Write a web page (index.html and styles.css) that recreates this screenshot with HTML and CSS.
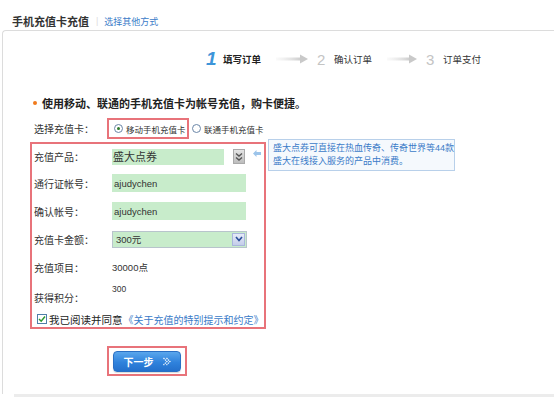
FILE: index.html
```html
<!DOCTYPE html>
<html lang="zh-CN">
<head>
  <meta charset="UTF-8">
  <title>手机充值卡充值</title>
  <link rel="stylesheet" href="styles.css">
</head>
<body>

  <div class="page-head">
    <h1 class="page-title">手机充值卡充值</h1>
    <span class="sep">|</span>
    <a class="other-way" href="#">选择其他方式</a>
  </div>

  <div class="panel">

    <!-- steps -->
    <div class="steps">
      <span class="step-num active">1</span>
      <span class="step-text active">填写订单</span>
      <svg class="step-arrow" width="32" height="10" viewBox="0 0 32 10">
        <defs>
          <linearGradient id="fade1" x1="0" x2="1" y1="0" y2="0">
            <stop offset="0" stop-color="#e6e6e6" stop-opacity="0.2"/>
            <stop offset="1" stop-color="#c9c9c9"/>
          </linearGradient>
        </defs>
        <rect x="0" y="3.5" width="26" height="3" fill="url(#fade1)"/>
        <path d="M24 0.5 L32 5 L24 9.5 Z" fill="#c9c9c9"/>
      </svg>
      <span class="step-num">2</span>
      <span class="step-text">确认订单</span>
      <svg class="step-arrow" width="30" height="10" viewBox="0 0 30 10">
        <rect x="0" y="3.5" width="24" height="3" fill="url(#fade1)"/>
        <path d="M22 0.5 L30 5 L22 9.5 Z" fill="#c9c9c9"/>
      </svg>
      <span class="step-num">3</span>
      <span class="step-text">订单支付</span>
    </div>

    <div class="notice"><span class="dot"></span>使用移动、联通的手机充值卡为帐号充值，购卡便捷。</div>

    <div class="card-choice">
      <span class="choice-label">选择充值卡：</span>
      <div class="choice-box">
        <label class="radio"><span class="radio-mark on"></span>移动手机充值卡</label>
      </div>
      <label class="radio"><span class="radio-mark"></span>联通手机充值卡</label>
    </div>

    <div class="form-wrap">
      <div class="form-box">
        <div class="form-row">
          <span class="field-label">充值产品：</span>
          <div class="product-select">
            <span class="product-value">盛大点券</span>
            <span class="gray-btn">
              <svg width="8" height="10" viewBox="0 0 8 10"><path d="M1 1.5 L4 4 L7 1.5 M1 5.5 L4 8 L7 5.5" fill="none" stroke="#555" stroke-width="1.4"/></svg>
            </span>
          </div>
          <svg class="hint-arrow" width="8" height="7" viewBox="0 0 8 7"><path d="M0 3.5 L3.5 0 L3.5 2 L8 2 L8 5 L3.5 5 L3.5 7 Z" fill="#9cc4ea"/></svg>
        </div>
        <div class="form-row">
          <span class="field-label">通行证帐号：</span>
          <input class="text-input" type="text" value="ajudychen">
        </div>
        <div class="form-row">
          <span class="field-label">确认帐号：</span>
          <input class="text-input" type="text" value="ajudychen">
        </div>
        <div class="form-row">
          <span class="field-label">充值卡金额：</span>
          <div class="amount-select">
            <span class="amount-value">300元</span>
            <span class="blue-btn">
              <svg width="8" height="6" viewBox="0 0 8 6"><path d="M1 1 L4 4.5 L7 1" fill="none" stroke="#2a4f9a" stroke-width="1.6"/></svg>
            </span>
          </div>
        </div>
        <div class="form-row">
          <span class="field-label">充值项目：</span>
          <span class="field-value">30000点</span>
        </div>
        <div class="form-row points-row">
          <span class="field-label">获得积分：</span>
          <span class="field-value small">300</span>
        </div>
        <div class="agree-row">
          <span class="check-box">
            <svg width="8" height="8" viewBox="0 0 8 8"><path d="M1 4 L3.2 6.2 L7 1.5" fill="none" stroke="#2f9a2f" stroke-width="1.5"/></svg>
          </span>
          <span class="agree-text">我已阅读并同意</span>
          <a class="agree-link" href="#">《关于充值的特别提示和约定》</a>
        </div>
      </div>
      <div class="tip">盛大点券可直接在热血传奇、传奇世界等44款<br>盛大在线接入服务的产品中消费。</div>
    </div>

    <div class="submit-box">
      <button class="next-btn" type="button">下一步
        <svg width="9" height="9" viewBox="0 0 9 9"><path d="M1.5 1 L5 4.5 L1.5 8 M4.5 1 L8 4.5 L4.5 8" fill="none" stroke="#fff" stroke-width="1.2" stroke-dasharray="1.4 0.8"/></svg>
      </button>
    </div>

  </div>

  <div class="foot-line"></div>

</body>
</html>
```

FILE: styles.css
```css
body {
  margin: 0;
  font-family: "Liberation Sans", "Noto Sans CJK SC", sans-serif;
  font-size: 10px;
  color: #333;
  background: #fff;
  overflow: hidden;
}

a {
  text-decoration: none;
}

.page-head {
  display: flex;
  align-items: center;
  height: 18px;
  padding: 12px 0 0 12px;
}

.page-title {
  margin: 0;
  font-size: 11px;
  font-weight: bold;
  color: #333;
}

.sep {
  margin: 0 6px 0 7px;
  font-size: 9px;
  color: #ddd;
}

.other-way {
  font-size: 9px;
  color: #3a7bc8;
}

.panel {
  margin-left: 2px;
  height: 363px;
  border-top: 1px solid #dcdcdc;
  border-left: 1px solid #dcdcdc;
  border-top-left-radius: 4px;
}

/* steps */
.steps {
  display: flex;
  align-items: center;
  height: 20px;
  margin: 18px 0 0 203px;
}

.step-num {
  font-size: 15px;
  color: #c4c4c4;
  width: 17px;
}

.step-num.active {
  font-size: 19px;
  font-weight: bold;
  font-style: italic;
  color: #3d95d9;
}

.step-text {
  font-size: 9.5px;
  color: #333;
}

.step-text.active {
  font-weight: bold;
  color: #222;
}

.step-arrow {
  margin: 0 9px 0 15px;
}

.notice {
  display: flex;
  align-items: center;
  height: 14px;
  margin: 27px 0 0 30px;
  font-size: 11px;
  font-weight: bold;
  color: #222;
}

.dot {
  width: 4px;
  height: 4px;
  border-radius: 50%;
  background: #f07a1c;
  margin-right: 5px;
}

/* card choice */
.card-choice {
  display: flex;
  align-items: center;
  height: 21px;
  margin: 8px 0 0 31px;
}

.choice-label {
  width: 73px;
  font-size: 10px;
}

.choice-box {
  display: flex;
  align-items: center;
  box-sizing: border-box;
  width: 82px;
  height: 21px;
  padding-left: 5px;
  border: 2px solid #e8737a;
  margin-right: 3px;
}

.radio {
  display: flex;
  align-items: center;
  font-size: 8.5px;
  color: #333;
  white-space: nowrap;
}

.radio-mark {
  box-sizing: border-box;
  width: 9px;
  height: 9px;
  border: 1px solid #6a86a8;
  border-radius: 50%;
  background: #fff;
  margin-right: 3px;
  position: relative;
}

.radio-mark.on::after {
  content: "";
  position: absolute;
  left: 2px;
  top: 2px;
  width: 3px;
  height: 3px;
  border-radius: 50%;
  background: #2d7a2d;
}

/* form */
.form-wrap {
  display: flex;
  align-items: flex-start;
  margin-left: 27px;
}

.form-box {
  box-sizing: border-box;
  width: 236px;
  height: 187px;
  margin-top: 3px;
  border: 2px solid #e8737a;
  padding: 0 0 0 2px;
}

.form-row {
  display: flex;
  align-items: center;
  height: 28px;
}

.form-row:first-child {
  height: 25px;
}

.field-label {
  width: 78px;
  font-size: 10px;
  color: #333;
  flex-shrink: 0;
}

.product-select {
  display: flex;
  align-items: center;
  width: 133px;
  height: 16px;
}

.product-value {
  width: 112px;
  height: 16px;
  line-height: 16px;
  background: #c8eccb;
  font-size: 11px;
  color: #333;
  padding-left: 1px;
  box-sizing: border-box;
}

.gray-btn {
  display: flex;
  align-items: center;
  justify-content: center;
  width: 12px;
  height: 15px;
  margin-left: 9px;
  background: linear-gradient(#e4e4e4, #bdbdbd);
  border: 1px solid #aaa;
  box-sizing: border-box;
}

.hint-arrow {
  margin: -6px 0 0 8px;
}

.text-input {
  box-sizing: border-box;
  width: 134px;
  height: 18px;
  padding: 0 2px;
  border: none;
  background: #c8eccb;
  font-family: "Liberation Sans", sans-serif;
  font-size: 9.5px;
  color: #333;
}

.amount-select {
  display: flex;
  align-items: center;
  justify-content: space-between;
  box-sizing: border-box;
  width: 135px;
  height: 17px;
  border: 1px solid #b8c4cc;
  background: #c8eccb;
  padding: 0 1px 0 3px;
}

.amount-value {
  font-size: 9.5px;
  color: #333;
}

.blue-btn {
  display: flex;
  align-items: center;
  justify-content: center;
  width: 13px;
  height: 13px;
  background: linear-gradient(#e6eaf8, #c4cdea);
  border: 1px solid #a9b6dc;
  box-sizing: border-box;
}

.field-value {
  font-size: 9.5px;
  color: #333;
}

.points-row {
  align-items: flex-start;
}

.points-row .field-label {
  padding-top: 9px;
}

.field-value.small {
  font-size: 8.5px;
  padding-top: 3px;
}

.agree-row {
  display: flex;
  align-items: center;
  height: 18px;
  padding-left: 3px;
  margin-top: 1px;
}

.check-box {
  display: flex;
  align-items: center;
  justify-content: center;
  box-sizing: border-box;
  width: 10px;
  height: 10px;
  border: 1px solid #4f7fa8;
  background: #fff;
  margin-right: 2px;
}

.agree-text {
  font-size: 10.5px;
  color: #222;
}

.agree-link {
  font-size: 10px;
  color: #3a7bc8;
  margin-left: 1px;
}

.tip {
  box-sizing: border-box;
  width: 187px;
  height: 32px;
  margin-left: 2px;
  padding: 2px 4px;
  border: 1px solid #b8d0ea;
  background: #f5f9fd;
  font-size: 9px;
  line-height: 13px;
  color: #3a7bc8;
  white-space: nowrap;
}

/* submit */
.submit-box {
  display: flex;
  align-items: center;
  justify-content: center;
  box-sizing: border-box;
  width: 80px;
  height: 30px;
  margin: 17px 0 0 104px;
  border: 2px solid #e8737a;
}

.next-btn {
  display: flex;
  align-items: center;
  justify-content: center;
  gap: 8px;
  width: 68px;
  height: 21px;
  padding: 0;
  border: 1px solid #2a6fc4;
  border-radius: 4px;
  background: linear-gradient(#5aa6ec, #2f82dc 55%, #2470cc);
  color: #fff;
  font-family: "Liberation Sans", "Noto Sans CJK SC", sans-serif;
  font-size: 10px;
  font-weight: bold;
  cursor: pointer;
  box-shadow: 0 1px 1px rgba(0,0,0,0.15);
}

.foot-line {
  height: 4px;
  margin-left: 14px;
  background: #ececec;
}
```
